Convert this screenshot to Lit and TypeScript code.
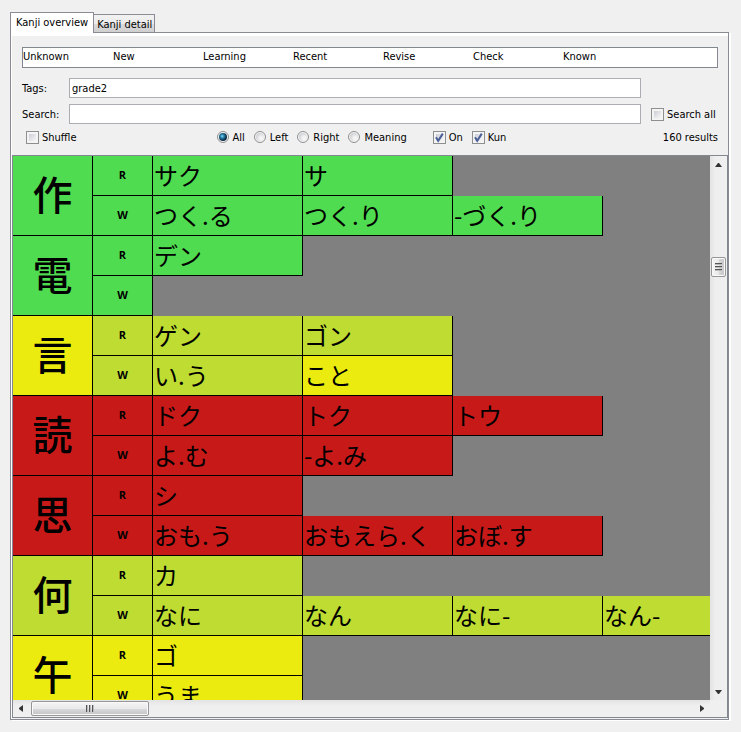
import { LitElement, html, css, svg } from "lit";
import { customElement, state } from "lit/decorators.js";
import { classMap } from "lit/directives/class-map.js";

type Level = "known" | "check" | "revise" | "unknown";
interface Reading { text: string; level: Level; }
interface Entry {
  kanji: string;
  level: Level;
  on: { level: Level; readings: Reading[] };
  kun: { level: Level; readings: Reading[] };
}

const side = (level: Level, ...texts: string[]) => ({
  level,
  readings: texts.map((text) => ({ text, level })),
});

const ENTRIES: Entry[] = [
  { kanji: "作", level: "known", on: side("known", "サク", "サ"), kun: side("known", "つく.る", "つく.り", "-づく.り") },
  { kanji: "電", level: "known", on: side("known", "デン"), kun: side("known") },
  {
    kanji: "言", level: "revise", on: side("check", "ゲン", "ゴン"),
    kun: { level: "check", readings: [{ text: "い.う", level: "check" }, { text: "こと", level: "revise" }] },
  },
  { kanji: "読", level: "unknown", on: side("unknown", "ドク", "トク", "トウ"), kun: side("unknown", "よ.む", "-よ.み") },
  { kanji: "思", level: "unknown", on: side("unknown", "シ"), kun: side("unknown", "おも.う", "おもえら.く", "おぼ.す") },
  { kanji: "何", level: "check", on: side("check", "カ"), kun: side("check", "なに", "なん", "なに-", "なん-") },
  { kanji: "午", level: "revise", on: side("revise", "ゴ"), kun: side("revise", "うま") },
];

@customElement("kanji-table")
class KanjiTable extends LitElement {
  static styles = css`
    :host { display: block; }
    table { table-layout: fixed; width: 740px; border-collapse: separate; border-spacing: 0; }
    .col-kanji { width: 80px; }
    .col-kind { width: 60px; }
    .col-reading { width: 150px; }
    tr { height: 40px; }
    th, td { box-sizing: border-box; padding: 0 0 2px; height: 40px; color: #000; line-height: 32px; }
    .cell { border-right: 1px solid #000; border-bottom: 1px solid #000; }
    .kanji { padding-bottom: 6px; font-size: 40px; line-height: 56px; font-weight: 500; text-align: center; }
    .kind { font: bold 11px/16px "Open Sans", sans-serif; text-align: center; }
    .reading { padding-left: 1px; font-size: 24px; text-align: left; white-space: nowrap; }
    .known { background: #50dc50; }
    .check { background: #bedc32; }
    .revise { background: #ebeb0f; }
    .unknown { background: #c81919; }
  `;

  private readings(items: Reading[]) {
    return items.map((r) => html`<td class=${classMap({ cell: true, reading: true, [r.level]: true })}>${r.text}</td>`);
  }

  render() {
    return html`
      <table aria-label="Kanji readings">
        <colgroup>
          <col class="col-kanji"><col class="col-kind">
          <col class="col-reading"><col class="col-reading"><col class="col-reading"><col class="col-reading">
        </colgroup>
        ${ENTRIES.map((e) => html`
          <tbody>
            <tr>
              <th class="cell kanji ${e.level}" rowspan="2" scope="rowgroup">${e.kanji}</th>
              <th class="cell kind ${e.on.level}" scope="row">R</th>
              ${this.readings(e.on.readings)}
            </tr>
            <tr>
              <th class="cell kind ${e.kun.level}" scope="row">W</th>
              ${this.readings(e.kun.readings)}
            </tr>
          </tbody>`)}
      </table>`;
  }
}

@customElement("app-root")
class AppRoot extends LitElement {
  @state() private tab = "Kanji overview";

  static styles = css`
    :host {
      display: flex; flex-direction: column; box-sizing: border-box;
      height: 100vh; padding: 12px 10px; background: #f0f0f0; color: #000;
      font: 11px/15px "DejaVu Sans Condensed", "DejaVu Sans", "Noto Sans CJK JP", sans-serif;
    }
    * { box-sizing: border-box; }
    .tabs { display: flex; align-items: flex-end; height: 20px; padding-right: 2px; }
    .tab {
      height: 18px; padding: 1px 2px 0 3px; font: inherit; color: inherit; white-space: nowrap;
      border: 1px solid #898c95; border-left: 0; border-bottom: 0;
      background: linear-gradient(#f2f2f2, #ebebeb 50%, #dcdcdc 51%, #cfcfcf);
    }
    .tab.active {
      height: 21px; padding: 0 5px 1px; margin-bottom: -1px; z-index: 1;
      border-left: 1px solid #898c95; background: #fff;
    }
    .panel {
      flex: 1; min-height: 0; display: flex; flex-direction: column; margin-right: 2px;
      border: 1px solid #898c95; box-shadow: 2px 1px #fff, inset 0 3px #fff, inset 1px 0 #fff;
      padding: 14px 0 1px 1px;
    }
    .legend {
      display: flex; height: 21px; margin: 0 10px; padding: 1px 0 0; list-style: none;
      border: 1px solid #828790; background: #fff;
    }
    .legend li { width: 90px; }
    .form {
      display: grid; grid-template-columns: 37px 1fr 67px; gap: 6px 10px;
      margin: 10px 10px 0; align-items: center;
    }
    .field { width: 100%; height: 20px; padding: 0 2px; font: inherit; color: #000; border: 1px solid #abadb3; border-radius: 0; background: #fff; outline: 0; }
    .options { display: flex; align-items: center; height: 26px; margin: 0 10px 5px 14px; }
    .filters, .kinds { display: flex; gap: 9px; }
    .filters { margin-left: 140px; }
    .kinds { margin-left: 26px; }
    .results { margin-left: auto; }
    .choice { display: flex; align-items: center; gap: 3px; white-space: nowrap; }
    .filters .choice { gap: 4px; }
    .check, .radio { appearance: none; margin: 0; flex: none; }
    .check {
      width: 13px; height: 13px; border: 1px solid #8e8f8f;
      background: linear-gradient(135deg, #cbcfd5, #f6f6f6) content-box, #f4f4f4; padding: 2px;
    }
    .mark { position: relative; display: flex; }
    .mark svg { position: absolute; inset: 0; pointer-events: none; display: none; }
    .check:checked + svg { display: block; }
    .radio {
      width: 12px; height: 12px; border: 1px solid #8e8f8f; border-radius: 50%;
      background: radial-gradient(circle at 65% 65%, #f4f4f4 20%, #c9cdd2 80%) content-box, #f4f4f4; padding: 1px;
    }
    .radio:checked { background: radial-gradient(circle at 40% 40%, #8fd9f5 0, #2c86b0 25%, #0b2b44 62%) content-box, #f4f4f4; }
    .scroller {
      flex: 1; min-height: 0; display: grid; grid-template: minmax(0, 1fr) 17px / minmax(0, 1fr) 17px;
      border: 1px solid #828790;
    }
    .view { overflow: auto; scrollbar-width: none; background: #808080; font-family: "Noto Sans CJK JP", sans-serif; }
    .bar { display: flex; background: linear-gradient(90deg, #e3e3e3, #eee 30%, #f0f0f0); }
    .bar.v { flex-direction: column; }
    .bar.h { background: linear-gradient(#e3e3e3, #eee 30%, #f0f0f0); }
    .arrow { width: 17px; height: 17px; padding: 0; border: 0; background: none; display: block; flex: none; }
    .arrow svg, .thumb svg { display: block; }
    .track { flex: 1; display: flex; min-width: 0; min-height: 0; }
    .v .track { flex-direction: column; padding: 84px 1px 0; }
    .h .track { padding: 1px 0 1px 1px; }
    .thumb {
      display: flex; align-items: center; justify-content: center; border: 1px solid #979797; border-radius: 2px;
      box-shadow: inset 0 0 0 1px #fafafa;
    }
    .v .thumb { height: 20px; background: linear-gradient(90deg, #f5f5f5, #e9e9eb 50%, #d9dadc 51%, #c4c4c7); }
    .h .thumb { width: 118px; background: linear-gradient(#f5f5f5, #e9e9eb 50%, #d9dadc 51%, #c4c4c7); }
  `;

  private arrow(label: string, points: string) {
    return html`<button class="arrow" aria-label=${label}>
      <svg width="17" height="17" viewBox="0 0 17 17">${svg`<polygon points=${points} fill="#333"/>`}</svg>
    </button>`;
  }

  private checkbox(label: string, checked = false) {
    return html`<label class="choice"><span class="mark">
      <input class="check" type="checkbox" .checked=${checked}>
      <svg width="13" height="13" viewBox="0 0 13 13"><path d="M3 6.2 5.2 9.8 9.8 2.6" fill="none" stroke="#4a5f97" stroke-width="2"/></svg>
    </span>${label}</label>`;
  }

  render() {
    const grip = [0, 3, 6];
    return html`
      <div class="tabs" role="tablist">
        ${["Kanji overview", "Kanji detail"].map((t) => html`
          <button role="tab" aria-selected=${t === this.tab ? "true" : "false"}
            class=${classMap({ tab: true, active: t === this.tab })} @click=${() => (this.tab = t)}>${t}</button>`)}
      </div>
      <main class="panel">
        <ul class="legend">
          ${["Unknown", "New", "Learning", "Recent", "Revise", "Check", "Known"].map((s) => html`<li>${s}</li>`)}
        </ul>
        <div class="form">
          <label for="tags">Tags:</label>
          <input id="tags" class="field" type="text" value="grade2"><span></span>
          <label for="search">Search:</label>
          <input id="search" class="field" type="text">
          ${this.checkbox("Search all")}
        </div>
        <div class="options">
          ${this.checkbox("Shuffle")}
          <div class="filters">
            ${["All", "Left", "Right", "Meaning"].map((t, i) => html`
              <label class="choice"><input class="radio" type="radio" name="filter" .checked=${i === 0}>${t}</label>`)}
          </div>
          <div class="kinds">${this.checkbox("On", true)}${this.checkbox("Kun", true)}</div>
          <span class="results">160 results</span>
        </div>
        <div class="scroller">
          <div class="view"><kanji-table></kanji-table></div>
          <div class="bar v">
            ${this.arrow("Scroll up", "8,7 9,7 12,11 5,11")}
            <div class="track"><div class="thumb">
              <svg width="7" height="8" viewBox="0 0 7 8">${grip.map((p) => svg`<rect x="0" y=${p} width="7" height="1" fill="#555"/><rect x="0" y=${p + 1} width="7" height="1" fill="#bbb"/>`)}</svg>
            </div></div>
            ${this.arrow("Scroll down", "5,7 12,7 9,11 8,11")}
          </div>
          <div class="bar h">
            ${this.arrow("Scroll left", "10,5 10,12 6,9 6,8")}
            <div class="track"><div class="thumb">
              <svg width="8" height="7" viewBox="0 0 8 7">${grip.map((p) => svg`<rect x=${p} y="0" width="1" height="7" fill="#555"/><rect x=${p + 1} y="0" width="1" height="7" fill="#bbb"/>`)}</svg>
            </div></div>
            ${this.arrow("Scroll right", "7,5 7,12 11,9 11,8")}
          </div>
        </div>
      </main>`;
  }
}
